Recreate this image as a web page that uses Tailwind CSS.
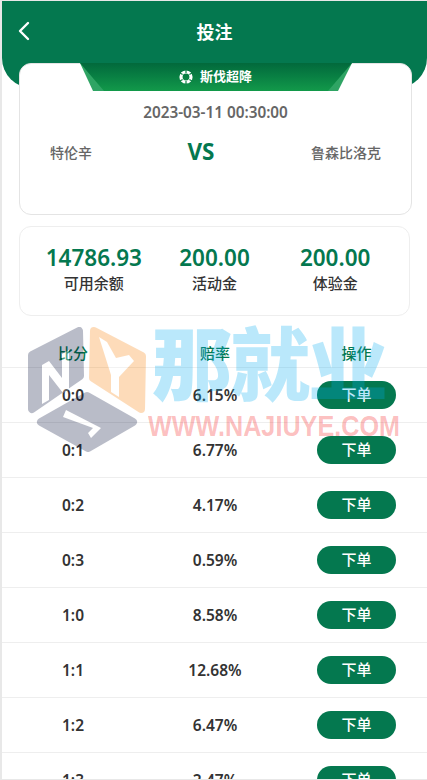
<!DOCTYPE html>
<html lang="zh-CN">
<head>
  <meta charset="UTF-8">
  <meta name="viewport" content="width=device-width, initial-scale=1.0">
  <title>投注</title>
  <script src="https://cdn.jsdelivr.net/npm/@tailwindcss/browser@4"></script>
</head>
<body class="bg-white">
  <div class="relative h-[780px] w-[427px] overflow-hidden border-t border-l-2 border-b border-[#e8e8e8] bg-white font-['Noto_Sans','Noto_Sans_CJK_SC',sans-serif] text-[#333]">

    <!-- header -->
    <header class="relative flex h-[87px] justify-center rounded-b-[30px] bg-[#04784f] pt-[17px] text-[18px] font-bold leading-[28px] text-white">
      <svg class="absolute left-[16px] top-[20px]" width="12" height="20" viewBox="0 0 12 20" fill="none" stroke="white" stroke-width="2.4" stroke-linecap="round" stroke-linejoin="round"><path d="M10 2 2 10l8 8"/></svg>
      <h1>投注</h1>
    </header>

    <main class="-mt-[25px] flex flex-col">
      <!-- match card -->
      <section class="relative mx-[17px] h-[152px] w-[393px] rounded-[12px] border border-[#e4e4e4] bg-white">
        <div class="absolute left-[60px] -top-[1px] h-[28px] w-[272px] bg-[#2fa464] [clip-path:polygon(0_0,100%_0,258px_100%,13px_100%)]"></div>
        <div class="absolute left-[60px] -top-[1px] flex h-[28px] w-[272px] items-center justify-center gap-[7px] bg-gradient-to-b from-[#02693c] to-[#12994a] pr-[1px] text-[13px] font-bold text-white [clip-path:polygon(0_0,100%_0,248px_100%,24px_100%)]">
          <svg width="14" height="14" viewBox="0 0 14 14"><circle cx="7" cy="7" r="5" fill="none" stroke="white" stroke-width="3.2"/><path d="M7 0v3M1 3l2.600 1.500M13 3l-2.600 1.500M1 11l2.600-1.500M13 11l-2.600-1.500M7 14v-3" stroke="#0a8044" stroke-width="1.200"/></svg>
          <span>斯伐超降</span>
        </div>
        <p class="absolute inset-x-0 top-[38px] text-center text-[15.300px] font-semibold leading-[20px] text-[#666]">2023-03-11 00:30:00</p>
        <div class="absolute inset-x-0 top-[72px] flex items-center justify-between pl-[30px] pr-[30px] text-[14px] font-medium text-[#666]">
          <span>特伦辛</span>
          <span class="-ml-[1px] text-[22.500px] font-bold leading-[32px] text-[#04784f]">VS</span>
          <span>鲁森比洛克</span>
        </div>
      </section>

      <!-- balances -->
      <section class="mx-[17px] mt-[11px] grid h-[90px] w-[391px] grid-cols-3 rounded-[12px] border border-[#eeeeee] bg-white pt-[15px] text-center">
        <div class="ml-[18px]">
          <p class="text-[22.500px] font-semibold leading-[31px] text-[#04784f]">14786.93</p>
          <p class="text-[15px] font-medium leading-[21px] text-[#333]">可用余额</p>
        </div>
        <div>
          <p class="text-[22.500px] font-semibold leading-[31px] text-[#04784f]">200.00</p>
          <p class="text-[15px] font-medium leading-[21px] text-[#333]">活动金</p>
        </div>
        <div class="-ml-[18px]">
          <p class="text-[22.500px] font-semibold leading-[31px] text-[#04784f]">200.00</p>
          <p class="text-[15px] font-medium leading-[21px] text-[#333]">体验金</p>
        </div>
      </section>

      <!-- odds table -->
      <table class="mt-[14px] w-[425px] table-fixed text-center text-[15.500px] font-semibold text-[#333]">
        <thead>
          <tr class="h-[37px] border-b border-[#eeeeee] text-[15px] text-[#04784f]">
            <th class="w-[142px] pt-[9px] font-medium">比分</th><th class="w-[142px] pt-[9px] font-medium">赔率</th><th class="pt-[9px] font-medium">操作</th>
          </tr>
        </thead>
        <tbody>
          <tr class="h-[55px] border-b border-[#eeeeee]"><td class="pt-[2px]">0:0</td><td class="pt-[2px]">6.15%</td><td><button class="h-[28px] w-[79px] rounded-full bg-[#04784f] text-[15px] font-medium text-white">下单</button></td></tr>
          <tr class="h-[55px] border-b border-[#eeeeee]"><td class="pt-[2px]">0:1</td><td class="pt-[2px]">6.77%</td><td><button class="h-[28px] w-[79px] rounded-full bg-[#04784f] text-[15px] font-medium text-white">下单</button></td></tr>
          <tr class="h-[55px] border-b border-[#eeeeee]"><td class="pt-[2px]">0:2</td><td class="pt-[2px]">4.17%</td><td><button class="h-[28px] w-[79px] rounded-full bg-[#04784f] text-[15px] font-medium text-white">下单</button></td></tr>
          <tr class="h-[55px] border-b border-[#eeeeee]"><td class="pt-[2px]">0:3</td><td class="pt-[2px]">0.59%</td><td><button class="h-[28px] w-[79px] rounded-full bg-[#04784f] text-[15px] font-medium text-white">下单</button></td></tr>
          <tr class="h-[55px] border-b border-[#eeeeee]"><td class="pt-[2px]">1:0</td><td class="pt-[2px]">8.58%</td><td><button class="h-[28px] w-[79px] rounded-full bg-[#04784f] text-[15px] font-medium text-white">下单</button></td></tr>
          <tr class="h-[55px] border-b border-[#eeeeee]"><td class="pt-[2px]">1:1</td><td class="pt-[2px]">12.68%</td><td><button class="h-[28px] w-[79px] rounded-full bg-[#04784f] text-[15px] font-medium text-white">下单</button></td></tr>
          <tr class="h-[55px] border-b border-[#eeeeee]"><td class="pt-[2px]">1:2</td><td class="pt-[2px]">6.47%</td><td><button class="h-[28px] w-[79px] rounded-full bg-[#04784f] text-[15px] font-medium text-white">下单</button></td></tr>
          <tr class="h-[55px] border-b border-[#eeeeee]"><td class="pt-[2px]">1:3</td><td class="pt-[2px]">2.47%</td><td><button class="h-[28px] w-[79px] rounded-full bg-[#04784f] text-[15px] font-medium text-white">下单</button></td></tr>
        </tbody>
      </table>
    </main>

    <!-- watermark -->
    <div class="pointer-events-none absolute left-[22px] top-[323px] h-[140px] w-[380px]">
      <svg class="absolute left-[1px] top-0 opacity-[.27]" width="125" height="130" viewBox="0 0 125 130">
        <g stroke-width="8" stroke-linejoin="round">
          <path d="M7 31 54 7l1 45L7 85Z" fill="#000b37" stroke="#000b37"/>
          <path d="M69 7l48 25-1 53-48-31Z" fill="#f87e00" stroke="#f87e00"/>
          <path d="M62 72l46 26-45 26-47-26Z" fill="#000b37" stroke="#000b37"/>
        </g>
        <path d="M17 41l7-4 13 17V30l7-4v40l-6 3-14-18v25l-7 4Z" fill="#fff"/>
        <path d="M74 13l8 5 9 16 13-3 5 6-15 16v20l-8-5V51Z" fill="#fff"/>
        <path d="M41 86l35 18-10 10-3-5 5-5-30-11Z" fill="#fff"/>
      </svg>
      <span class="absolute left-[128px] top-[-7px] whitespace-nowrap text-[80px] font-black leading-[92px] tracking-[-2px] text-[#00aaf0]/27">那就业</span>
      <span class="absolute left-[124px] top-[85px] origin-left scale-x-[.84] whitespace-nowrap font-['Liberation_Sans',sans-serif] text-[30px] font-bold leading-[34px] text-[#f40707]/27">WWW.NAJIUYE.COM</span>
    </div>
  </div>
</body>
</html>
